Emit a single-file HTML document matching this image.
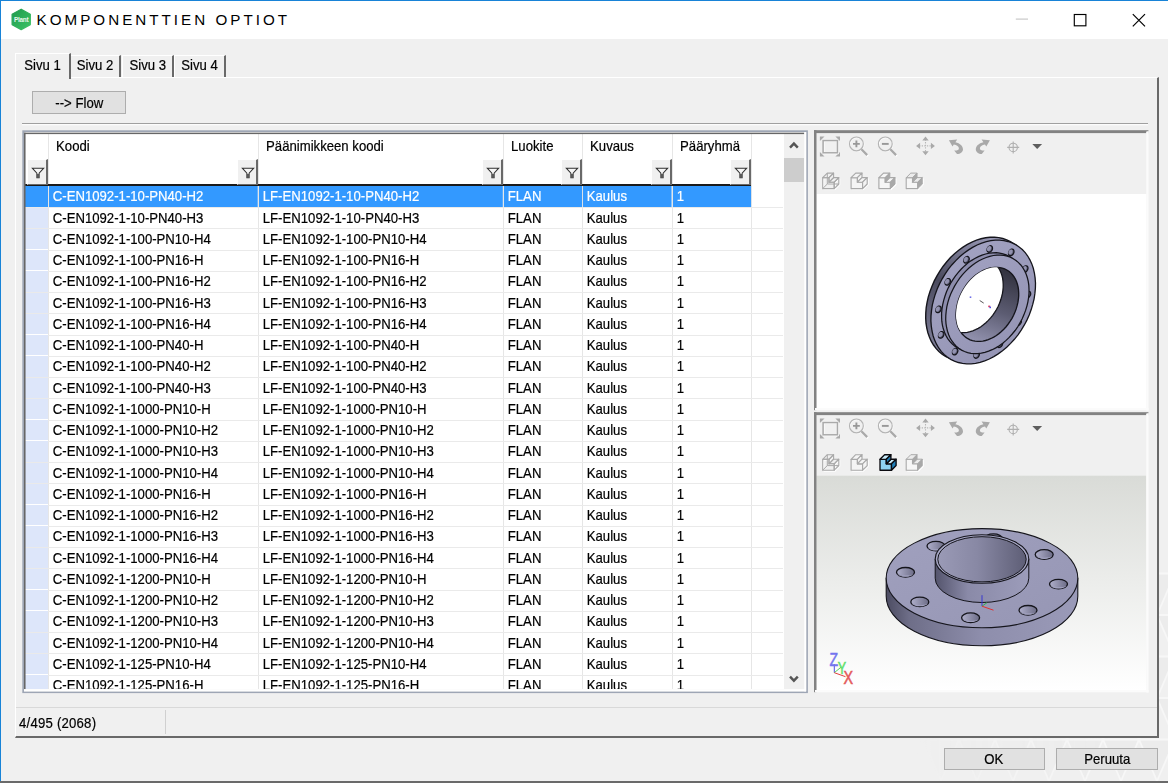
<!DOCTYPE html>
<html lang="fi"><head><meta charset="utf-8"><title>KOMPONENTTIEN OPTIOT</title>
<style>
*{box-sizing:border-box;margin:0;padding:0}
html,body{width:1168px;height:783px;overflow:hidden;background:#f0f0f0}
body{position:relative;font-family:"Liberation Sans",sans-serif;font-size:15px;letter-spacing:0;color:#000;-webkit-text-stroke:0.22px #000}
.abs,.win *{position:absolute}
.win{position:absolute;left:0;top:0;width:1168px;height:783px;background:#f0f0f0;overflow:hidden}
.bl{left:0;top:0;width:1.2px;height:783px;background:#1883d7}
.bt{left:0;top:0;width:1168px;height:1.2px;background:#1883d7}
.bb{left:0;top:781.3px;width:1168px;height:2px;background:#6a6a6a}
.title{left:1px;top:1px;width:1167px;height:37.6px;background:#fff}
.ttext{-webkit-text-stroke:0;left:36.5px;top:10.6px;font-size:15.2px;letter-spacing:3.02px;line-height:18px;white-space:nowrap;color:#000}
.tab{height:22.3px;top:55px;border-top:1.25px solid #fff;border-left:1.25px solid #fff;border-right:2.5px solid #696969;background:#f0f0f0;white-space:nowrap;line-height:14px}
.tab span{left:0;right:0;top:1.6px;text-align:center;transform:scaleX(0.877)}
.tab.on{top:53px;height:26px;z-index:3}
.tab.on span{top:3.6px}
.page{left:15px;top:77.3px;width:1144px;height:661px;border-top:1.25px solid #fff;border-left:1.25px solid #fff;border-right:2.5px solid #696969;border-bottom:2.5px solid #696969;background:#f0f0f0}
.btn{background:#e1e1e1;border:1px solid #adadad;text-align:center;white-space:nowrap}
.btn span{position:static;display:inline-block;transform:scaleX(0.877)}
.sep{left:22px;top:122.7px;width:1126px;height:1.25px;background:#a0a0a0;box-shadow:0 1.25px 0 #fff}
.gridb{left:22px;top:131px;width:786px;height:561.5px;background:#fff;border:1px solid #a0a0a0;border-right-color:#e3e3e3;border-bottom-color:#e8e8e8}
.gridb2{left:23px;top:132px;width:784px;height:559.5px;border:2px solid #6b6b6b;border-right:3px solid #a3adbb;border-bottom:2px solid #8e9cb0}
.grid{left:25px;top:134px;width:779px;height:555.2px;background:#fff;overflow:hidden}
.h{top:4.4px;height:16px;padding-left:9.2px;transform:scaleX(0.877);transform-origin:0 0;white-space:nowrap;line-height:16px}
.vl{top:0;width:1px;height:555px;background:#e6e6e6}
.hline{left:0;top:50px;width:726px;height:2.4px;background:#1a1a1a;z-index:1}
.fbtn{top:25px;width:21px;height:26.3px;background:#f0f0f0;border-left:1.25px solid #fff;border-top:1.25px solid #fff;border-right:2px solid #696969;border-bottom:1.5px solid #696969;z-index:2}
.fbtn .fn{left:2.6px;top:6.4px}
.r{left:0;width:758px;height:21.25px;white-space:nowrap}
.r:after{content:"";position:absolute;left:0;bottom:-0.6px;width:758px;height:1px;background:#eaeaea}
.r .rh{left:0;top:0;width:22.5px;height:20.2px;background:#dde6fa}
.r .c{top:0;height:20.2px;line-height:19.9px;padding-left:4.3px;overflow:hidden;transform:scaleX(0.877);transform-origin:0 0}
.r.sel .rh,.r.sel .c{background:#3399ff;color:#fff;-webkit-text-stroke-color:#fff}
.sb{left:759px;top:0;width:20px;height:555px;background:#f0f0f0}
.thumb{left:0;top:24px;width:20px;height:23.5px;background:#cdcdcd}
.panel{left:814px;width:335px;border:2.5px solid #828282;border-right:2.5px solid #fdfdfd;border-bottom:2.5px solid #fdfdfd;background:#f0f0f0;overflow:hidden}
.vp{left:0;top:61px;width:330px;overflow:hidden}
.stl{left:16px;top:706.8px;width:1141px;height:1.25px;background:#d9d9d9}
.std{left:165px;top:709.5px;width:1.25px;height:24.5px;background:#d0d0d0}
</style></head><body>
<div class="win">
 <div class="title"></div>
 <svg class="abs" style="left:10px;top:8px" width="23" height="23" viewBox="0 0 23 23"><defs><linearGradient id="lg" x1="0" y1="0" x2="1" y2="1"><stop offset="0" stop-color="#1f9a4e"/><stop offset="1" stop-color="#3cc365"/></linearGradient></defs><path d="M11.2 1.2 L20.3 6.2 V16.6 L11.2 21.6 L2.1 16.6 V6.2Z" fill="url(#lg)" stroke="url(#lg)" stroke-width="1.2" stroke-linejoin="round"/><text x="11.2" y="13.9" font-family="Liberation Sans, sans-serif" font-weight="bold" font-size="6.4" letter-spacing="-0.2" text-anchor="middle" fill="#e9f7ee">Plant</text></svg>
 <div class="ttext">KOMPONENTTIEN OPTIOT</div>
 <svg class="abs" style="left:1010px;top:8px" width="150" height="24" viewBox="0 0 150 24"><path d="M5.8 11.1H18" stroke="#c9c9c9" stroke-width="1.2" fill="none"/><rect x="64.3" y="6.5" width="11.6" height="11.3" fill="none" stroke="#000" stroke-width="1.15"/><path d="M122.8 6.2 L135 18.4 M135 6.2 L122.8 18.4" stroke="#000" stroke-width="1.2" fill="none"/></svg>

<svg class="abs" style="left:880px;top:560px" width="288" height="223" viewBox="0 0 288 223"><defs><linearGradient id="pf" x1="0" y1="0" x2="1" y2="0"><stop offset="0.12" stop-color="#fff" stop-opacity="0"/><stop offset="0.8" stop-color="#fff" stop-opacity="1"/></linearGradient><mask id="pm"><rect width="288" height="223" fill="url(#pf)"/></mask></defs><g mask="url(#pm)"><path d="M-101.0 179.5L-83.0 221.0L-65.0 179.5ZM-65.0 179.5L-47.0 221.0L-29.0 179.5ZM-29.0 179.5L-11.0 221.0L7.0 179.5ZM7.0 179.5L25.0 221.0L43.0 179.5ZM43.0 179.5L61.0 221.0L79.0 179.5ZM79.0 179.5L97.0 221.0L115.0 179.5ZM115.0 179.5L133.0 221.0L151.0 179.5ZM151.0 179.5L169.0 221.0L187.0 179.5ZM187.0 179.5L205.0 221.0L223.0 179.5ZM223.0 179.5L241.0 221.0L259.0 179.5ZM259.0 179.5L277.0 221.0L295.0 179.5ZM295.0 179.5L313.0 221.0L331.0 179.5ZM-83.0 138.0L-101.0 179.5L-119.0 138.0ZM-47.0 138.0L-65.0 179.5L-83.0 138.0ZM-11.0 138.0L-29.0 179.5L-47.0 138.0ZM25.0 138.0L7.0 179.5L-11.0 138.0ZM61.0 138.0L43.0 179.5L25.0 138.0ZM97.0 138.0L79.0 179.5L61.0 138.0ZM133.0 138.0L115.0 179.5L97.0 138.0ZM169.0 138.0L151.0 179.5L133.0 138.0ZM205.0 138.0L187.0 179.5L169.0 138.0ZM241.0 138.0L223.0 179.5L205.0 138.0ZM277.0 138.0L259.0 179.5L241.0 138.0ZM313.0 138.0L295.0 179.5L277.0 138.0ZM-101.0 96.5L-83.0 138.0L-65.0 96.5ZM-65.0 96.5L-47.0 138.0L-29.0 96.5ZM-29.0 96.5L-11.0 138.0L7.0 96.5ZM7.0 96.5L25.0 138.0L43.0 96.5ZM43.0 96.5L61.0 138.0L79.0 96.5ZM79.0 96.5L97.0 138.0L115.0 96.5ZM115.0 96.5L133.0 138.0L151.0 96.5ZM151.0 96.5L169.0 138.0L187.0 96.5ZM187.0 96.5L205.0 138.0L223.0 96.5ZM223.0 96.5L241.0 138.0L259.0 96.5ZM259.0 96.5L277.0 138.0L295.0 96.5ZM295.0 96.5L313.0 138.0L331.0 96.5ZM-83.0 55.0L-101.0 96.5L-119.0 55.0ZM-47.0 55.0L-65.0 96.5L-83.0 55.0ZM-11.0 55.0L-29.0 96.5L-47.0 55.0ZM25.0 55.0L7.0 96.5L-11.0 55.0ZM61.0 55.0L43.0 96.5L25.0 55.0ZM97.0 55.0L79.0 96.5L61.0 55.0ZM133.0 55.0L115.0 96.5L97.0 55.0ZM169.0 55.0L151.0 96.5L133.0 55.0ZM205.0 55.0L187.0 96.5L169.0 55.0ZM241.0 55.0L223.0 96.5L205.0 55.0ZM277.0 55.0L259.0 96.5L241.0 55.0ZM313.0 55.0L295.0 96.5L277.0 55.0ZM-101.0 13.5L-83.0 55.0L-65.0 13.5ZM-65.0 13.5L-47.0 55.0L-29.0 13.5ZM-29.0 13.5L-11.0 55.0L7.0 13.5ZM7.0 13.5L25.0 55.0L43.0 13.5ZM43.0 13.5L61.0 55.0L79.0 13.5ZM79.0 13.5L97.0 55.0L115.0 13.5ZM115.0 13.5L133.0 55.0L151.0 13.5ZM151.0 13.5L169.0 55.0L187.0 13.5ZM187.0 13.5L205.0 55.0L223.0 13.5ZM223.0 13.5L241.0 55.0L259.0 13.5ZM259.0 13.5L277.0 55.0L295.0 13.5ZM295.0 13.5L313.0 55.0L331.0 13.5ZM-83.0 -28.0L-101.0 13.5L-119.0 -28.0ZM-47.0 -28.0L-65.0 13.5L-83.0 -28.0ZM-11.0 -28.0L-29.0 13.5L-47.0 -28.0ZM25.0 -28.0L7.0 13.5L-11.0 -28.0ZM61.0 -28.0L43.0 13.5L25.0 -28.0ZM97.0 -28.0L79.0 13.5L61.0 -28.0ZM133.0 -28.0L115.0 13.5L97.0 -28.0ZM169.0 -28.0L151.0 13.5L133.0 -28.0ZM205.0 -28.0L187.0 13.5L169.0 -28.0ZM241.0 -28.0L223.0 13.5L205.0 -28.0ZM277.0 -28.0L259.0 13.5L241.0 -28.0ZM313.0 -28.0L295.0 13.5L277.0 -28.0ZM-101.0 -69.5L-83.0 -28.0L-65.0 -69.5ZM-65.0 -69.5L-47.0 -28.0L-29.0 -69.5ZM-29.0 -69.5L-11.0 -28.0L7.0 -69.5ZM7.0 -69.5L25.0 -28.0L43.0 -69.5ZM43.0 -69.5L61.0 -28.0L79.0 -69.5ZM79.0 -69.5L97.0 -28.0L115.0 -69.5ZM115.0 -69.5L133.0 -28.0L151.0 -69.5ZM151.0 -69.5L169.0 -28.0L187.0 -69.5ZM187.0 -69.5L205.0 -28.0L223.0 -69.5ZM223.0 -69.5L241.0 -28.0L259.0 -69.5ZM259.0 -69.5L277.0 -28.0L295.0 -69.5ZM295.0 -69.5L313.0 -28.0L331.0 -69.5Z" fill="#ececec"/><path d="M-101.0 179.5L-83.0 221.0L-65.0 179.5L-47.0 221.0L-29.0 179.5L-11.0 221.0L7.0 179.5L25.0 221.0L43.0 179.5L61.0 221.0L79.0 179.5L97.0 221.0L115.0 179.5L133.0 221.0L151.0 179.5L169.0 221.0L187.0 179.5L205.0 221.0L223.0 179.5L241.0 221.0L259.0 179.5L277.0 221.0L295.0 179.5L313.0 221.0M0 179.5H288M-101.0 179.5L-83.0 138.0L-65.0 179.5L-47.0 138.0L-29.0 179.5L-11.0 138.0L7.0 179.5L25.0 138.0L43.0 179.5L61.0 138.0L79.0 179.5L97.0 138.0L115.0 179.5L133.0 138.0L151.0 179.5L169.0 138.0L187.0 179.5L205.0 138.0L223.0 179.5L241.0 138.0L259.0 179.5L277.0 138.0L295.0 179.5L313.0 138.0M0 138.0H288M-101.0 96.5L-83.0 138.0L-65.0 96.5L-47.0 138.0L-29.0 96.5L-11.0 138.0L7.0 96.5L25.0 138.0L43.0 96.5L61.0 138.0L79.0 96.5L97.0 138.0L115.0 96.5L133.0 138.0L151.0 96.5L169.0 138.0L187.0 96.5L205.0 138.0L223.0 96.5L241.0 138.0L259.0 96.5L277.0 138.0L295.0 96.5L313.0 138.0M0 96.5H288M-101.0 96.5L-83.0 55.0L-65.0 96.5L-47.0 55.0L-29.0 96.5L-11.0 55.0L7.0 96.5L25.0 55.0L43.0 96.5L61.0 55.0L79.0 96.5L97.0 55.0L115.0 96.5L133.0 55.0L151.0 96.5L169.0 55.0L187.0 96.5L205.0 55.0L223.0 96.5L241.0 55.0L259.0 96.5L277.0 55.0L295.0 96.5L313.0 55.0M0 55.0H288M-101.0 13.5L-83.0 55.0L-65.0 13.5L-47.0 55.0L-29.0 13.5L-11.0 55.0L7.0 13.5L25.0 55.0L43.0 13.5L61.0 55.0L79.0 13.5L97.0 55.0L115.0 13.5L133.0 55.0L151.0 13.5L169.0 55.0L187.0 13.5L205.0 55.0L223.0 13.5L241.0 55.0L259.0 13.5L277.0 55.0L295.0 13.5L313.0 55.0M0 13.5H288M-101.0 13.5L-83.0 -28.0L-65.0 13.5L-47.0 -28.0L-29.0 13.5L-11.0 -28.0L7.0 13.5L25.0 -28.0L43.0 13.5L61.0 -28.0L79.0 13.5L97.0 -28.0L115.0 13.5L133.0 -28.0L151.0 13.5L169.0 -28.0L187.0 13.5L205.0 -28.0L223.0 13.5L241.0 -28.0L259.0 13.5L277.0 -28.0L295.0 13.5L313.0 -28.0M0 -28.0H288M-101.0 -69.5L-83.0 -28.0L-65.0 -69.5L-47.0 -28.0L-29.0 -69.5L-11.0 -28.0L7.0 -69.5L25.0 -28.0L43.0 -69.5L61.0 -28.0L79.0 -69.5L97.0 -28.0L115.0 -69.5L133.0 -28.0L151.0 -69.5L169.0 -28.0L187.0 -69.5L205.0 -28.0L223.0 -69.5L241.0 -28.0L259.0 -69.5L277.0 -28.0L295.0 -69.5L313.0 -28.0M0 -69.5H288" fill="none" stroke="#f7f7f7" stroke-width="1.8"/></g></svg>
 <div class="page"></div>
 <div class="tab" style="left:70px;width:51px"><span>Sivu 2</span></div>
 <div class="tab" style="left:121.5px;width:52.5px"><span>Sivu 3</span></div>
 <div class="tab" style="left:174px;width:52px"><span>Sivu 4</span></div>
 <div class="tab on" style="left:15px;width:56px"><span>Sivu 1</span></div>
 <div class="abs" style="left:16.25px;top:77px;width:52.5px;height:3px;background:#f0f0f0;z-index:4"></div>

 <div class="btn" style="left:32px;top:91.3px;width:94px;height:22.6px;line-height:21.5px"><span>--&gt; Flow</span></div>
 <div class="sep"></div>


 <div class="grid">
  <i class="vl" style="left:23px"></i><i class="vl" style="left:233px"></i><i class="vl" style="left:478px"></i><i class="vl" style="left:557px"></i><i class="vl" style="left:647px"></i><i class="vl" style="left:726px"></i>
  <span class="h" style="left:23px;width:239.45px">Koodi</span><span class="h" style="left:233px;width:279.36px">Päänimikkeen koodi</span><span class="h" style="left:478px;width:90.08px">Luokite</span><span class="h" style="left:557px;width:102.62px">Kuvaus</span><span class="h" style="left:647px;width:90.08px">Pääryhmä</span>
  <div class="hline"></div>
  <div class="fbtn" style="left:2px"><svg class="fn" viewBox="0 0 16 16" width="14" height="14"><path d="M1.5 2.5 H14.5 L9.3 8.2 V13.5 H6.7 V8.2 Z" fill="#f6f6f6" stroke="#303030" stroke-width="1.15" stroke-linejoin="miter"/><path d="M6.9 9 H9.1 V13.3 H6.9Z" fill="#555"/></svg></div>
  <div class="fbtn" style="left:2px"><svg class="fn" viewBox="0 0 16 16" width="14" height="14"><path d="M1.5 2.5 H14.5 L9.3 8.2 V13.5 H6.7 V8.2 Z" fill="#f6f6f6" stroke="#303030" stroke-width="1.15" stroke-linejoin="miter"/><path d="M6.9 9 H9.1 V13.3 H6.9Z" fill="#555"/></svg></div><div class="fbtn" style="left:212px"><svg class="fn" viewBox="0 0 16 16" width="14" height="14"><path d="M1.5 2.5 H14.5 L9.3 8.2 V13.5 H6.7 V8.2 Z" fill="#f6f6f6" stroke="#303030" stroke-width="1.15" stroke-linejoin="miter"/><path d="M6.9 9 H9.1 V13.3 H6.9Z" fill="#555"/></svg></div><div class="fbtn" style="left:457px"><svg class="fn" viewBox="0 0 16 16" width="14" height="14"><path d="M1.5 2.5 H14.5 L9.3 8.2 V13.5 H6.7 V8.2 Z" fill="#f6f6f6" stroke="#303030" stroke-width="1.15" stroke-linejoin="miter"/><path d="M6.9 9 H9.1 V13.3 H6.9Z" fill="#555"/></svg></div><div class="fbtn" style="left:536px"><svg class="fn" viewBox="0 0 16 16" width="14" height="14"><path d="M1.5 2.5 H14.5 L9.3 8.2 V13.5 H6.7 V8.2 Z" fill="#f6f6f6" stroke="#303030" stroke-width="1.15" stroke-linejoin="miter"/><path d="M6.9 9 H9.1 V13.3 H6.9Z" fill="#555"/></svg></div><div class="fbtn" style="left:626px"><svg class="fn" viewBox="0 0 16 16" width="14" height="14"><path d="M1.5 2.5 H14.5 L9.3 8.2 V13.5 H6.7 V8.2 Z" fill="#f6f6f6" stroke="#303030" stroke-width="1.15" stroke-linejoin="miter"/><path d="M6.9 9 H9.1 V13.3 H6.9Z" fill="#555"/></svg></div><div class="fbtn" style="left:705px"><svg class="fn" viewBox="0 0 16 16" width="14" height="14"><path d="M1.5 2.5 H14.5 L9.3 8.2 V13.5 H6.7 V8.2 Z" fill="#f6f6f6" stroke="#303030" stroke-width="1.15" stroke-linejoin="miter"/><path d="M6.9 9 H9.1 V13.3 H6.9Z" fill="#555"/></svg></div>
<div class="r sel" style="top:52.40px"><span class="rh"></span><span class="c" style="left:24px;width:238.31px">C-EN1092-1-10-PN40-H2</span><span class="c" style="left:234px;width:278.22px">LF-EN1092-1-10-PN40-H2</span><span class="c" style="left:479px;width:88.94px">FLAN</span><span class="c" style="left:558px;width:101.48px">Kaulus</span><span class="c" style="left:648px;width:88.94px">1</span></div>
<div class="r" style="top:73.65px"><span class="rh"></span><span class="c" style="left:24px;width:238.31px">C-EN1092-1-10-PN40-H3</span><span class="c" style="left:234px;width:278.22px">LF-EN1092-1-10-PN40-H3</span><span class="c" style="left:479px;width:88.94px">FLAN</span><span class="c" style="left:558px;width:101.48px">Kaulus</span><span class="c" style="left:648px;width:88.94px">1</span></div>
<div class="r" style="top:94.90px"><span class="rh"></span><span class="c" style="left:24px;width:238.31px">C-EN1092-1-100-PN10-H4</span><span class="c" style="left:234px;width:278.22px">LF-EN1092-1-100-PN10-H4</span><span class="c" style="left:479px;width:88.94px">FLAN</span><span class="c" style="left:558px;width:101.48px">Kaulus</span><span class="c" style="left:648px;width:88.94px">1</span></div>
<div class="r" style="top:116.15px"><span class="rh"></span><span class="c" style="left:24px;width:238.31px">C-EN1092-1-100-PN16-H</span><span class="c" style="left:234px;width:278.22px">LF-EN1092-1-100-PN16-H</span><span class="c" style="left:479px;width:88.94px">FLAN</span><span class="c" style="left:558px;width:101.48px">Kaulus</span><span class="c" style="left:648px;width:88.94px">1</span></div>
<div class="r" style="top:137.40px"><span class="rh"></span><span class="c" style="left:24px;width:238.31px">C-EN1092-1-100-PN16-H2</span><span class="c" style="left:234px;width:278.22px">LF-EN1092-1-100-PN16-H2</span><span class="c" style="left:479px;width:88.94px">FLAN</span><span class="c" style="left:558px;width:101.48px">Kaulus</span><span class="c" style="left:648px;width:88.94px">1</span></div>
<div class="r" style="top:158.65px"><span class="rh"></span><span class="c" style="left:24px;width:238.31px">C-EN1092-1-100-PN16-H3</span><span class="c" style="left:234px;width:278.22px">LF-EN1092-1-100-PN16-H3</span><span class="c" style="left:479px;width:88.94px">FLAN</span><span class="c" style="left:558px;width:101.48px">Kaulus</span><span class="c" style="left:648px;width:88.94px">1</span></div>
<div class="r" style="top:179.90px"><span class="rh"></span><span class="c" style="left:24px;width:238.31px">C-EN1092-1-100-PN16-H4</span><span class="c" style="left:234px;width:278.22px">LF-EN1092-1-100-PN16-H4</span><span class="c" style="left:479px;width:88.94px">FLAN</span><span class="c" style="left:558px;width:101.48px">Kaulus</span><span class="c" style="left:648px;width:88.94px">1</span></div>
<div class="r" style="top:201.15px"><span class="rh"></span><span class="c" style="left:24px;width:238.31px">C-EN1092-1-100-PN40-H</span><span class="c" style="left:234px;width:278.22px">LF-EN1092-1-100-PN40-H</span><span class="c" style="left:479px;width:88.94px">FLAN</span><span class="c" style="left:558px;width:101.48px">Kaulus</span><span class="c" style="left:648px;width:88.94px">1</span></div>
<div class="r" style="top:222.40px"><span class="rh"></span><span class="c" style="left:24px;width:238.31px">C-EN1092-1-100-PN40-H2</span><span class="c" style="left:234px;width:278.22px">LF-EN1092-1-100-PN40-H2</span><span class="c" style="left:479px;width:88.94px">FLAN</span><span class="c" style="left:558px;width:101.48px">Kaulus</span><span class="c" style="left:648px;width:88.94px">1</span></div>
<div class="r" style="top:243.65px"><span class="rh"></span><span class="c" style="left:24px;width:238.31px">C-EN1092-1-100-PN40-H3</span><span class="c" style="left:234px;width:278.22px">LF-EN1092-1-100-PN40-H3</span><span class="c" style="left:479px;width:88.94px">FLAN</span><span class="c" style="left:558px;width:101.48px">Kaulus</span><span class="c" style="left:648px;width:88.94px">1</span></div>
<div class="r" style="top:264.90px"><span class="rh"></span><span class="c" style="left:24px;width:238.31px">C-EN1092-1-1000-PN10-H</span><span class="c" style="left:234px;width:278.22px">LF-EN1092-1-1000-PN10-H</span><span class="c" style="left:479px;width:88.94px">FLAN</span><span class="c" style="left:558px;width:101.48px">Kaulus</span><span class="c" style="left:648px;width:88.94px">1</span></div>
<div class="r" style="top:286.15px"><span class="rh"></span><span class="c" style="left:24px;width:238.31px">C-EN1092-1-1000-PN10-H2</span><span class="c" style="left:234px;width:278.22px">LF-EN1092-1-1000-PN10-H2</span><span class="c" style="left:479px;width:88.94px">FLAN</span><span class="c" style="left:558px;width:101.48px">Kaulus</span><span class="c" style="left:648px;width:88.94px">1</span></div>
<div class="r" style="top:307.40px"><span class="rh"></span><span class="c" style="left:24px;width:238.31px">C-EN1092-1-1000-PN10-H3</span><span class="c" style="left:234px;width:278.22px">LF-EN1092-1-1000-PN10-H3</span><span class="c" style="left:479px;width:88.94px">FLAN</span><span class="c" style="left:558px;width:101.48px">Kaulus</span><span class="c" style="left:648px;width:88.94px">1</span></div>
<div class="r" style="top:328.65px"><span class="rh"></span><span class="c" style="left:24px;width:238.31px">C-EN1092-1-1000-PN10-H4</span><span class="c" style="left:234px;width:278.22px">LF-EN1092-1-1000-PN10-H4</span><span class="c" style="left:479px;width:88.94px">FLAN</span><span class="c" style="left:558px;width:101.48px">Kaulus</span><span class="c" style="left:648px;width:88.94px">1</span></div>
<div class="r" style="top:349.90px"><span class="rh"></span><span class="c" style="left:24px;width:238.31px">C-EN1092-1-1000-PN16-H</span><span class="c" style="left:234px;width:278.22px">LF-EN1092-1-1000-PN16-H</span><span class="c" style="left:479px;width:88.94px">FLAN</span><span class="c" style="left:558px;width:101.48px">Kaulus</span><span class="c" style="left:648px;width:88.94px">1</span></div>
<div class="r" style="top:371.15px"><span class="rh"></span><span class="c" style="left:24px;width:238.31px">C-EN1092-1-1000-PN16-H2</span><span class="c" style="left:234px;width:278.22px">LF-EN1092-1-1000-PN16-H2</span><span class="c" style="left:479px;width:88.94px">FLAN</span><span class="c" style="left:558px;width:101.48px">Kaulus</span><span class="c" style="left:648px;width:88.94px">1</span></div>
<div class="r" style="top:392.40px"><span class="rh"></span><span class="c" style="left:24px;width:238.31px">C-EN1092-1-1000-PN16-H3</span><span class="c" style="left:234px;width:278.22px">LF-EN1092-1-1000-PN16-H3</span><span class="c" style="left:479px;width:88.94px">FLAN</span><span class="c" style="left:558px;width:101.48px">Kaulus</span><span class="c" style="left:648px;width:88.94px">1</span></div>
<div class="r" style="top:413.65px"><span class="rh"></span><span class="c" style="left:24px;width:238.31px">C-EN1092-1-1000-PN16-H4</span><span class="c" style="left:234px;width:278.22px">LF-EN1092-1-1000-PN16-H4</span><span class="c" style="left:479px;width:88.94px">FLAN</span><span class="c" style="left:558px;width:101.48px">Kaulus</span><span class="c" style="left:648px;width:88.94px">1</span></div>
<div class="r" style="top:434.90px"><span class="rh"></span><span class="c" style="left:24px;width:238.31px">C-EN1092-1-1200-PN10-H</span><span class="c" style="left:234px;width:278.22px">LF-EN1092-1-1200-PN10-H</span><span class="c" style="left:479px;width:88.94px">FLAN</span><span class="c" style="left:558px;width:101.48px">Kaulus</span><span class="c" style="left:648px;width:88.94px">1</span></div>
<div class="r" style="top:456.15px"><span class="rh"></span><span class="c" style="left:24px;width:238.31px">C-EN1092-1-1200-PN10-H2</span><span class="c" style="left:234px;width:278.22px">LF-EN1092-1-1200-PN10-H2</span><span class="c" style="left:479px;width:88.94px">FLAN</span><span class="c" style="left:558px;width:101.48px">Kaulus</span><span class="c" style="left:648px;width:88.94px">1</span></div>
<div class="r" style="top:477.40px"><span class="rh"></span><span class="c" style="left:24px;width:238.31px">C-EN1092-1-1200-PN10-H3</span><span class="c" style="left:234px;width:278.22px">LF-EN1092-1-1200-PN10-H3</span><span class="c" style="left:479px;width:88.94px">FLAN</span><span class="c" style="left:558px;width:101.48px">Kaulus</span><span class="c" style="left:648px;width:88.94px">1</span></div>
<div class="r" style="top:498.65px"><span class="rh"></span><span class="c" style="left:24px;width:238.31px">C-EN1092-1-1200-PN10-H4</span><span class="c" style="left:234px;width:278.22px">LF-EN1092-1-1200-PN10-H4</span><span class="c" style="left:479px;width:88.94px">FLAN</span><span class="c" style="left:558px;width:101.48px">Kaulus</span><span class="c" style="left:648px;width:88.94px">1</span></div>
<div class="r" style="top:519.90px"><span class="rh"></span><span class="c" style="left:24px;width:238.31px">C-EN1092-1-125-PN10-H4</span><span class="c" style="left:234px;width:278.22px">LF-EN1092-1-125-PN10-H4</span><span class="c" style="left:479px;width:88.94px">FLAN</span><span class="c" style="left:558px;width:101.48px">Kaulus</span><span class="c" style="left:648px;width:88.94px">1</span></div>
<div class="r" style="top:541.15px"><span class="rh"></span><span class="c" style="left:24px;width:238.31px">C-EN1092-1-125-PN16-H</span><span class="c" style="left:234px;width:278.22px">LF-EN1092-1-125-PN16-H</span><span class="c" style="left:479px;width:88.94px">FLAN</span><span class="c" style="left:558px;width:101.48px">Kaulus</span><span class="c" style="left:648px;width:88.94px">1</span></div>
  <div class="sb"><div class="thumb"></div>
   <svg style="left:0;top:0" width="20" height="20" viewBox="0 0 20 20"><path d="M6.0 13.7 L9.9 9.6 L13.8 13.7" fill="none" stroke="#555" stroke-width="2.4"/></svg>
   <svg style="left:0;top:535px" width="20" height="20" viewBox="0 0 20 20"><path d="M6.0 7.6 L9.9 11.7 L13.8 7.6" fill="none" stroke="#555" stroke-width="2.4"/></svg>
  </div>
 </div>

 <svg class="abs" style="left:20px;top:128px;z-index:5;pointer-events:none" width="792" height="568" viewBox="20 128 792 568">
  <rect x="23.15" y="131.15" width="783.9" height="561.1" fill="none" stroke="#9ea6b5" stroke-width="1.7"/>
  <rect x="24" y="132.7" width="780.3" height="1.4" fill="#666"/>
  <rect x="24" y="132.7" width="1.55" height="556.6" fill="#666"/>
  <rect x="804.3" y="132" width="1.9" height="559.4" fill="#fff"/>
  <rect x="24" y="689.2" width="782" height="2.2" fill="#fff"/>
 </svg>
 <svg class="abs" style="left:814.0px;top:130.0px" width="335" height="281" viewBox="0 0 335 281"><rect x="0" y="0" width="335" height="281" fill="#f0f0f0"/><rect x="2.4" y="64" width="330" height="214.2" fill="#fff"/><g><path d="M5.9 6.5h4.6l-4.6 4.6Z M26.0 6.5v4.6l-4.6 -4.6Z M5.9 26.6v-4.6l4.6 4.6Z M26.0 26.6h-4.6l4.6 -4.6Z" fill="#a9a9a9"/><rect x="9.9" y="11.4" width="14.4" height="12.2" fill="none" stroke="#fff" stroke-width="1.2"/><rect x="9.1" y="10.6" width="14.4" height="12.2" fill="none" stroke="#a9a9a9" stroke-width="1.5"/><path d="M48.0 20.1 L54.0 26.1" stroke="#fff" stroke-width="2.2" fill="none"/><circle cx="43.1" cy="14.6" r="6.9" fill="none" stroke="#fff" stroke-width="1"/><circle cx="42.4" cy="13.9" r="6.9" fill="none" stroke="#b4b4b4" stroke-width="1.15"/><path d="M47.4 19.3 L53.2 25.1" stroke="#a9a9a9" stroke-width="2.3" fill="none"/><path d="M39.0 13.9H45.8 M42.4 10.5V17.3" stroke="#989898" stroke-width="1.9" fill="none"/><path d="M76.89999999999999 20.1 L82.89999999999999 26.1" stroke="#fff" stroke-width="2.2" fill="none"/><circle cx="72.0" cy="14.6" r="6.9" fill="none" stroke="#fff" stroke-width="1"/><circle cx="71.3" cy="13.9" r="6.9" fill="none" stroke="#b4b4b4" stroke-width="1.15"/><path d="M76.3 19.3 L82.1 25.1" stroke="#a9a9a9" stroke-width="2.3" fill="none"/><path d="M67.89999999999999 13.9H74.7" stroke="#989898" stroke-width="1.9" fill="none"/><path d="M111.5 9.5V22.3 M105.1 15.9H117.9" stroke="#b8b8b8" stroke-width="1.1" stroke-dasharray="1.3 1.3" fill="none"/><path d="M111.5 6.5l3.2 4h-6.4Z M111.5 25.3l3.2 -4h-6.4Z M102.1 15.9l4 -3.2v6.4Z M120.9 15.9l-4 -3.2v6.4Z" fill="#a9a9a9"/><path transform="translate(134.6 9)" d="M0.3 1.2 L8.6 0.6 L6.8 3.2 C11.5 4.2 14.6 7.2 14.4 10.6 C14.2 13.2 11.6 15.2 8.4 15.1 L5.6 11.4 C8.4 11.6 10.2 10.9 10.3 9.4 C10.4 7.6 8.2 6.2 5.2 5.6 L3.9 7.4 Z" fill="#a9a9a9"/><path transform="translate(176.2 9) scale(-1 1)" d="M0.3 1.2 L8.6 0.6 L6.8 3.2 C11.5 4.2 14.6 7.2 14.4 10.6 C14.2 13.2 11.6 15.2 8.4 15.1 L5.6 11.4 C8.4 11.6 10.2 10.9 10.3 9.4 C10.4 7.6 8.2 6.2 5.2 5.6 L3.9 7.4 Z" fill="#a9a9a9"/><circle cx="199.2" cy="17.4" r="4.2" fill="none" stroke="#b0b0b0" stroke-width="1.1"/><path d="M193.2 17.4H205.2 M199.2 11.399999999999999V23.4" stroke="#b0b0b0" stroke-width="1.1" fill="none"/><path d="M218.3 14.1 H228.1 L223.2 18.9Z" fill="#5e5e5e"/><polygon points="9.70,48.70 16.00,48.70 16.00,53.20 21.20,53.20 21.20,59.60 9.70,59.60" fill="none" stroke="#fff" stroke-width="1.0" stroke-linejoin="round"/><polygon points="21.20,53.20 25.80,48.60 25.80,55.00 21.20,59.60" fill="none" stroke="#fff" stroke-width="1.0" stroke-linejoin="round"/><polygon points="8.70,47.70 15.00,47.70 15.00,52.20 20.20,52.20 20.20,58.60 8.70,58.60" fill="none" stroke="#a9a9a9" stroke-width="1.1" stroke-linejoin="round"/><polygon points="8.70,47.70 13.30,43.10 19.60,43.10 15.00,47.70" fill="none" stroke="#a9a9a9" stroke-width="1.1" stroke-linejoin="round"/><polygon points="15.00,47.70 19.60,43.10 19.60,47.60 15.00,52.20" fill="none" stroke="#a9a9a9" stroke-width="1.1" stroke-linejoin="round"/><polygon points="15.00,52.20 19.60,47.60 24.80,47.60 20.20,52.20" fill="none" stroke="#a9a9a9" stroke-width="1.1" stroke-linejoin="round"/><polygon points="20.20,52.20 24.80,47.60 24.80,54.00 20.20,58.60" fill="none" stroke="#a9a9a9" stroke-width="1.1" stroke-linejoin="round"/><path d="M13.30 43.10 V54.00 H24.80 M8.70 58.60 L13.30 54.00" fill="none" stroke="#a9a9a9" stroke-width="1"/><polygon points="38.10,48.70 44.40,48.70 44.40,53.20 49.60,53.20 49.60,59.60 38.10,59.60" fill="none" stroke="#fff" stroke-width="1.0" stroke-linejoin="round"/><polygon points="49.60,53.20 54.20,48.60 54.20,55.00 49.60,59.60" fill="none" stroke="#fff" stroke-width="1.0" stroke-linejoin="round"/><polygon points="37.10,47.70 43.40,47.70 43.40,52.20 48.60,52.20 48.60,58.60 37.10,58.60" fill="#f4f4f4" stroke="#a9a9a9" stroke-width="1.15" stroke-linejoin="round"/><polygon points="37.10,47.70 41.70,43.10 48.00,43.10 43.40,47.70" fill="#f4f4f4" stroke="#a9a9a9" stroke-width="1.15" stroke-linejoin="round"/><polygon points="43.40,47.70 48.00,43.10 48.00,47.60 43.40,52.20" fill="#f4f4f4" stroke="#a9a9a9" stroke-width="1.15" stroke-linejoin="round"/><polygon points="43.40,52.20 48.00,47.60 53.20,47.60 48.60,52.20" fill="#f4f4f4" stroke="#a9a9a9" stroke-width="1.15" stroke-linejoin="round"/><polygon points="48.60,52.20 53.20,47.60 53.20,54.00 48.60,58.60" fill="#f4f4f4" stroke="#a9a9a9" stroke-width="1.15" stroke-linejoin="round"/><polygon points="65.90,48.70 72.20,48.70 72.20,53.20 77.40,53.20 77.40,59.60 65.90,59.60" fill="none" stroke="#fff" stroke-width="1.0" stroke-linejoin="round"/><polygon points="77.40,53.20 82.00,48.60 82.00,55.00 77.40,59.60" fill="none" stroke="#fff" stroke-width="1.0" stroke-linejoin="round"/><polygon points="64.90,47.70 71.20,47.70 71.20,52.20 76.40,52.20 76.40,58.60 64.90,58.60" fill="#f6f6f6" stroke="#a9a9a9" stroke-width="1.15" stroke-linejoin="round"/><polygon points="64.90,47.70 69.50,43.10 75.80,43.10 71.20,47.70" fill="#f6f6f6" stroke="#a9a9a9" stroke-width="1.15" stroke-linejoin="round"/><polygon points="71.20,52.20 75.80,47.60 81.00,47.60 76.40,52.20" fill="#f6f6f6" stroke="#a9a9a9" stroke-width="1.15" stroke-linejoin="round"/><polygon points="71.20,47.70 75.80,43.10 75.80,47.60 71.20,52.20" fill="#a9a9a9" stroke="#a9a9a9" stroke-width="1.0" stroke-linejoin="round"/><polygon points="76.40,52.20 81.00,47.60 81.00,54.00 76.40,58.60" fill="#a9a9a9" stroke="#a9a9a9" stroke-width="1.0" stroke-linejoin="round"/><polygon points="93.20,48.70 99.50,48.70 99.50,53.20 104.70,53.20 104.70,59.60 93.20,59.60" fill="none" stroke="#fff" stroke-width="1.0" stroke-linejoin="round"/><polygon points="104.70,53.20 109.30,48.60 109.30,55.00 104.70,59.60" fill="none" stroke="#fff" stroke-width="1.0" stroke-linejoin="round"/><polygon points="92.20,47.70 98.50,47.70 98.50,52.20 103.70,52.20 103.70,58.60 92.20,58.60" fill="#f6f6f6" stroke="#a9a9a9" stroke-width="1.1" stroke-linejoin="round"/><polygon points="92.20,47.70 96.80,43.10 103.10,43.10 98.50,47.70" fill="#ececec" stroke="#a9a9a9" stroke-width="1.0" stroke-linejoin="round"/><polygon points="98.50,52.20 103.10,47.60 108.30,47.60 103.70,52.20" fill="#ececec" stroke="#a9a9a9" stroke-width="1.0" stroke-linejoin="round"/><polygon points="98.50,47.70 103.10,43.10 103.10,47.60 98.50,52.20" fill="#a8a8a8" stroke="#a8a8a8" stroke-width="0.8" stroke-linejoin="round"/><polygon points="103.70,52.20 108.30,47.60 108.30,54.00 103.70,58.60" fill="#a8a8a8" stroke="#a8a8a8" stroke-width="0.8" stroke-linejoin="round"/></g><defs><linearGradient id="v1rim" gradientUnits="userSpaceOnUse" x1="189.2" y1="102.0" x2="139.2" y2="242.0"><stop offset="0" stop-color="#a4a4c2"/><stop offset="0.45" stop-color="#4a4a5e"/><stop offset="1" stop-color="#8c8ca8"/></linearGradient><linearGradient id="v1bore" gradientUnits="userSpaceOnUse" x1="194.2" y1="137.0" x2="164.2" y2="222.0"><stop offset="0" stop-color="#2e2e3a"/><stop offset="0.5" stop-color="#5c5c72"/><stop offset="1" stop-color="#a0a0be"/></linearGradient><linearGradient id="v1face" gradientUnits="userSpaceOnUse" x1="129.2" y1="122.0" x2="209.2" y2="222.0"><stop offset="0" stop-color="#a2a2c2"/><stop offset="1" stop-color="#9494b4"/></linearGradient><clipPath id="v1c"><path d="M192.8 140.0 L194.9 141.3 L196.8 142.9 L198.5 144.8 L200.1 146.8 L201.4 149.1 L202.5 151.5 L203.4 154.2 L204.1 157.0 L204.5 159.9 L204.7 162.9 L204.7 166.0 L204.4 169.2 L203.9 172.4 L203.1 175.7 L202.2 178.9 L201.0 182.1 L199.6 185.2 L198.0 188.3 L196.2 191.2 L194.2 194.0 L192.1 196.7 L189.8 199.2 L187.4 201.5 L184.9 203.6 L182.4 205.5 L179.7 207.1 L177.0 208.5 L174.3 209.6 L171.5 210.5 L168.8 211.1 L166.1 211.4 L163.5 211.4 L161.0 211.2 L158.5 210.6 L156.1 209.8 L153.9 208.7 L151.9 207.4 L150.0 205.8 L148.2 204.0 L146.7 201.9 L145.4 199.6 L144.2 197.2 L143.3 194.5 L142.7 191.8 L142.2 188.8 L142.0 185.8 L142.1 182.7 L142.4 179.5 L142.9 176.3 L143.6 173.1 L144.6 169.8 L145.8 166.6 L147.2 163.5 L148.8 160.5 L150.6 157.5 L152.5 154.7 L154.7 152.0 L156.9 149.5 L159.3 147.2 L161.8 145.1 L164.4 143.3 L167.1 141.6 L169.8 140.2 L172.5 139.1 L175.2 138.2 L177.9 137.6 L180.6 137.3 L183.2 137.3 L185.8 137.6 L188.3 138.1 L190.6 138.9 L192.8 140.0Z"/></clipPath></defs><path d="M196.4 111.7 L199.9 113.9 L203.1 116.6 L205.9 119.6 L208.5 123.1 L210.7 126.9 L212.6 131.0 L214.1 135.4 L215.2 140.0 L215.9 144.9 L216.3 150.0 L216.2 155.2 L215.7 160.5 L214.9 165.8 L213.6 171.2 L212.0 176.6 L210.0 181.9 L207.7 187.2 L205.0 192.2 L202.0 197.2 L198.7 201.9 L195.2 206.3 L191.4 210.5 L187.4 214.3 L183.3 217.8 L179.0 220.9 L174.5 223.7 L170.0 226.0 L165.5 227.9 L160.9 229.3 L156.4 230.3 L151.9 230.8 L147.5 230.9 L143.2 230.5 L139.1 229.6 L135.2 228.2 L131.5 226.4 L128.1 224.2 L124.9 221.5 L122.0 218.4 L119.5 215.0 L117.2 211.2 L115.4 207.1 L113.9 202.7 L112.8 198.1 L112.0 193.2 L111.7 188.1 L111.8 182.9 L112.2 177.6 L113.1 172.3 L114.3 166.9 L116.0 161.5 L118.0 156.2 L120.3 150.9 L123.0 145.8 L126.0 140.9 L129.2 136.2 L132.8 131.8 L136.5 127.6 L140.5 123.8 L144.7 120.3 L149.0 117.1 L153.4 114.4 L157.9 112.1 L162.5 110.2 L167.0 108.8 L171.6 107.8 L176.1 107.3 L180.4 107.2 L184.7 107.6 L188.8 108.5 L192.7 109.9 L196.4 111.7Z" fill="url(#v1rim)" stroke="#15151c" stroke-width="1.4"/><path d="M201.7 114.6 L205.1 116.9 L208.3 119.5 L211.2 122.6 L213.7 126.0 L215.9 129.8 L217.8 133.9 L219.3 138.3 L220.4 143.0 L221.1 147.8 L221.5 152.9 L221.4 158.1 L220.9 163.4 L220.1 168.8 L218.8 174.2 L217.2 179.6 L215.2 184.9 L212.9 190.1 L210.2 195.2 L207.2 200.1 L204.0 204.8 L200.4 209.3 L196.6 213.4 L192.7 217.3 L188.5 220.8 L184.2 223.9 L179.8 226.6 L175.3 229.0 L170.7 230.9 L166.1 232.3 L161.6 233.3 L157.1 233.8 L152.7 233.8 L148.5 233.4 L144.4 232.5 L140.4 231.2 L136.7 229.4 L133.3 227.1 L130.1 224.5 L127.2 221.4 L124.7 218.0 L122.5 214.2 L120.6 210.1 L119.1 205.7 L118.0 201.0 L117.3 196.2 L116.9 191.1 L117.0 185.9 L117.5 180.6 L118.3 175.2 L119.6 169.8 L121.2 164.4 L123.2 159.1 L125.5 153.9 L128.2 148.8 L131.2 143.9 L134.4 139.2 L138.0 134.7 L141.8 130.6 L145.7 126.7 L149.9 123.2 L154.2 120.1 L158.6 117.4 L163.1 115.0 L167.7 113.1 L172.3 111.7 L176.8 110.7 L181.3 110.2 L185.7 110.2 L189.9 110.6 L194.0 111.5 L198.0 112.8 L201.7 114.6Z" fill="url(#v1face)" stroke="#15151c" stroke-width="1.3"/><path d="M199.0 119.3 L199.6 119.9 L199.9 120.6 L200.0 121.6 L199.9 122.6 L199.4 123.6 L198.8 124.5 L198.0 125.2 L197.2 125.6 L196.3 125.7 L195.5 125.4 L195.0 124.9 L194.6 124.1 L194.5 123.2 L194.7 122.2 L195.1 121.2 L195.7 120.3 L196.5 119.6 L197.4 119.2 L198.2 119.1 L199.0 119.3Z" fill="#5c5c74" stroke="#15151c" stroke-width="1.25"/><path d="M197.8 119.6 L198.3 120.0 L198.5 120.6 L198.6 121.3 L198.5 122.1 L198.2 122.9 L197.7 123.6 L197.1 124.1 L196.4 124.4 L195.7 124.5 L195.2 124.3 L194.7 123.9 L194.4 123.3 L194.3 122.6 L194.5 121.8 L194.8 121.0 L195.3 120.3 L195.9 119.8 L196.6 119.5 L197.2 119.4 L197.8 119.6Z" fill="#9292b0"/><path d="M213.0 136.0 L213.6 136.6 L213.9 137.3 L214.0 138.3 L213.8 139.3 L213.4 140.3 L212.8 141.2 L212.0 141.9 L211.1 142.3 L210.3 142.3 L209.5 142.1 L208.9 141.6 L208.6 140.8 L208.5 139.9 L208.6 138.8 L209.1 137.8 L209.7 137.0 L210.5 136.3 L211.4 135.9 L212.2 135.8 L213.0 136.0Z" fill="#5c5c74" stroke="#15151c" stroke-width="1.25"/><path d="M211.8 136.3 L212.2 136.7 L212.5 137.3 L212.6 138.0 L212.5 138.8 L212.1 139.6 L211.6 140.3 L211.0 140.8 L210.4 141.1 L209.7 141.2 L209.1 141.0 L208.7 140.6 L208.4 140.0 L208.3 139.2 L208.5 138.4 L208.8 137.7 L209.3 137.0 L209.9 136.5 L210.5 136.2 L211.2 136.1 L211.8 136.3Z" fill="#9292b0"/><path d="M215.7 161.5 L216.3 162.1 L216.6 162.8 L216.7 163.8 L216.6 164.8 L216.1 165.8 L215.5 166.7 L214.7 167.4 L213.8 167.8 L213.0 167.9 L212.2 167.6 L211.6 167.1 L211.3 166.3 L211.2 165.4 L211.3 164.3 L211.8 163.3 L212.4 162.5 L213.2 161.8 L214.1 161.4 L214.9 161.3 L215.7 161.5Z" fill="#5c5c74" stroke="#15151c" stroke-width="1.25"/><path d="M214.5 161.8 L215.0 162.2 L215.2 162.8 L215.3 163.5 L215.2 164.3 L214.9 165.1 L214.4 165.8 L213.7 166.3 L213.1 166.6 L212.4 166.7 L211.8 166.5 L211.4 166.1 L211.1 165.5 L211.0 164.7 L211.2 164.0 L211.5 163.2 L212.0 162.5 L212.6 162.0 L213.3 161.7 L213.9 161.6 L214.5 161.8Z" fill="#9292b0"/><path d="M206.4 189.0 L207.0 189.6 L207.3 190.3 L207.4 191.3 L207.3 192.3 L206.8 193.3 L206.2 194.2 L205.4 194.9 L204.6 195.3 L203.7 195.3 L202.9 195.1 L202.4 194.6 L202.0 193.8 L201.9 192.9 L202.1 191.8 L202.5 190.8 L203.1 190.0 L203.9 189.3 L204.8 188.9 L205.6 188.8 L206.4 189.0Z" fill="#5c5c74" stroke="#15151c" stroke-width="1.25"/><path d="M205.2 189.3 L205.7 189.7 L206.0 190.3 L206.0 191.0 L205.9 191.8 L205.6 192.6 L205.1 193.3 L204.5 193.8 L203.8 194.1 L203.1 194.2 L202.6 194.0 L202.1 193.6 L201.8 193.0 L201.7 192.2 L201.9 191.4 L202.2 190.7 L202.7 190.0 L203.3 189.5 L204.0 189.2 L204.6 189.1 L205.2 189.3Z" fill="#9292b0"/><path d="M187.6 211.1 L188.2 211.7 L188.6 212.4 L188.7 213.4 L188.5 214.4 L188.1 215.4 L187.4 216.3 L186.6 217.0 L185.8 217.4 L184.9 217.5 L184.2 217.2 L183.6 216.7 L183.2 215.9 L183.1 215.0 L183.3 214.0 L183.7 213.0 L184.3 212.1 L185.1 211.4 L186.0 211.0 L186.9 210.9 L187.6 211.1Z" fill="#5c5c74" stroke="#15151c" stroke-width="1.25"/><path d="M186.4 211.4 L186.9 211.8 L187.2 212.4 L187.2 213.1 L187.1 213.9 L186.8 214.7 L186.3 215.4 L185.7 215.9 L185.0 216.2 L184.4 216.3 L183.8 216.1 L183.3 215.7 L183.0 215.1 L183.0 214.4 L183.1 213.6 L183.4 212.8 L183.9 212.1 L184.5 211.6 L185.2 211.3 L185.8 211.2 L186.4 211.4Z" fill="#9292b0"/><path d="M164.4 222.0 L164.9 222.5 L165.3 223.3 L165.4 224.2 L165.2 225.2 L164.8 226.2 L164.2 227.1 L163.4 227.8 L162.5 228.2 L161.7 228.3 L160.9 228.0 L160.3 227.5 L160.0 226.7 L159.9 225.8 L160.0 224.8 L160.4 223.8 L161.1 222.9 L161.9 222.2 L162.7 221.8 L163.6 221.7 L164.4 222.0Z" fill="#5c5c74" stroke="#15151c" stroke-width="1.25"/><path d="M163.2 222.2 L163.6 222.6 L163.9 223.2 L164.0 223.9 L163.9 224.7 L163.5 225.5 L163.0 226.2 L162.4 226.7 L161.8 227.0 L161.1 227.1 L160.5 226.9 L160.1 226.5 L159.8 225.9 L159.7 225.2 L159.8 224.4 L160.2 223.6 L160.7 222.9 L161.3 222.4 L161.9 222.1 L162.6 222.0 L163.2 222.2Z" fill="#9292b0"/><path d="M142.9 218.6 L143.4 219.1 L143.8 219.9 L143.9 220.8 L143.7 221.8 L143.3 222.8 L142.7 223.7 L141.9 224.4 L141.0 224.8 L140.2 224.9 L139.4 224.7 L138.8 224.1 L138.5 223.4 L138.4 222.4 L138.5 221.4 L139.0 220.4 L139.6 219.5 L140.4 218.8 L141.2 218.4 L142.1 218.3 L142.9 218.6Z" fill="#5c5c74" stroke="#15151c" stroke-width="1.25"/><path d="M141.7 218.8 L142.1 219.2 L142.4 219.8 L142.5 220.6 L142.4 221.3 L142.0 222.1 L141.5 222.8 L140.9 223.3 L140.3 223.6 L139.6 223.7 L139.0 223.5 L138.6 223.1 L138.3 222.5 L138.2 221.8 L138.3 221.0 L138.7 220.2 L139.2 219.5 L139.8 219.0 L140.4 218.7 L141.1 218.6 L141.7 218.8Z" fill="#9292b0"/><path d="M128.9 201.9 L129.5 202.4 L129.8 203.2 L129.9 204.1 L129.8 205.2 L129.3 206.2 L128.7 207.0 L127.9 207.7 L127.0 208.1 L126.2 208.2 L125.4 208.0 L124.8 207.4 L124.5 206.7 L124.4 205.7 L124.6 204.7 L125.0 203.7 L125.6 202.8 L126.4 202.1 L127.3 201.7 L128.1 201.7 L128.9 201.9Z" fill="#5c5c74" stroke="#15151c" stroke-width="1.25"/><path d="M127.7 202.1 L128.2 202.5 L128.4 203.1 L128.5 203.9 L128.4 204.7 L128.1 205.4 L127.6 206.1 L127.0 206.6 L126.3 206.9 L125.6 207.0 L125.0 206.8 L124.6 206.4 L124.3 205.8 L124.2 205.1 L124.4 204.3 L124.7 203.5 L125.2 202.9 L125.8 202.3 L126.5 202.0 L127.1 202.0 L127.7 202.1Z" fill="#9292b0"/><path d="M126.2 176.4 L126.8 176.9 L127.1 177.7 L127.2 178.6 L127.1 179.7 L126.6 180.7 L126.0 181.5 L125.2 182.2 L124.3 182.6 L123.5 182.7 L122.7 182.5 L122.1 181.9 L121.8 181.2 L121.7 180.2 L121.8 179.2 L122.3 178.2 L122.9 177.3 L123.7 176.6 L124.6 176.2 L125.4 176.1 L126.2 176.4Z" fill="#5c5c74" stroke="#15151c" stroke-width="1.25"/><path d="M125.0 176.6 L125.4 177.0 L125.7 177.6 L125.8 178.4 L125.7 179.2 L125.3 179.9 L124.9 180.6 L124.2 181.1 L123.6 181.4 L122.9 181.5 L122.3 181.3 L121.9 180.9 L121.6 180.3 L121.5 179.6 L121.7 178.8 L122.0 178.0 L122.5 177.4 L123.1 176.8 L123.8 176.5 L124.4 176.5 L125.0 176.6Z" fill="#9292b0"/><path d="M135.5 148.9 L136.0 149.4 L136.4 150.2 L136.5 151.1 L136.3 152.2 L135.9 153.2 L135.3 154.0 L134.5 154.7 L133.6 155.1 L132.8 155.2 L132.0 155.0 L131.4 154.4 L131.1 153.7 L131.0 152.7 L131.1 151.7 L131.6 150.7 L132.2 149.8 L133.0 149.1 L133.8 148.7 L134.7 148.7 L135.5 148.9Z" fill="#5c5c74" stroke="#15151c" stroke-width="1.25"/><path d="M134.3 149.1 L134.7 149.5 L135.0 150.1 L135.1 150.9 L135.0 151.7 L134.6 152.4 L134.1 153.1 L133.5 153.6 L132.9 153.9 L132.2 154.0 L131.6 153.8 L131.2 153.4 L130.9 152.8 L130.8 152.1 L130.9 151.3 L131.3 150.5 L131.8 149.9 L132.4 149.3 L133.0 149.0 L133.7 149.0 L134.3 149.1Z" fill="#9292b0"/><path d="M154.2 126.8 L154.8 127.3 L155.2 128.1 L155.3 129.0 L155.1 130.0 L154.7 131.0 L154.1 131.9 L153.3 132.6 L152.4 133.0 L151.5 133.1 L150.8 132.9 L150.2 132.3 L149.8 131.6 L149.7 130.6 L149.9 129.6 L150.3 128.6 L151.0 127.7 L151.8 127.0 L152.6 126.6 L153.5 126.5 L154.2 126.8Z" fill="#5c5c74" stroke="#15151c" stroke-width="1.25"/><path d="M153.1 127.0 L153.5 127.4 L153.8 128.0 L153.9 128.8 L153.7 129.5 L153.4 130.3 L152.9 131.0 L152.3 131.5 L151.6 131.8 L151.0 131.9 L150.4 131.7 L149.9 131.3 L149.7 130.7 L149.6 130.0 L149.7 129.2 L150.1 128.4 L150.5 127.7 L151.2 127.2 L151.8 126.9 L152.5 126.8 L153.1 127.0Z" fill="#9292b0"/><path d="M177.5 116.0 L178.1 116.5 L178.4 117.3 L178.5 118.2 L178.4 119.2 L178.0 120.2 L177.3 121.1 L176.5 121.8 L175.7 122.2 L174.8 122.3 L174.0 122.0 L173.5 121.5 L173.1 120.7 L173.0 119.8 L173.2 118.8 L173.6 117.8 L174.2 116.9 L175.0 116.2 L175.9 115.8 L176.7 115.7 L177.5 116.0Z" fill="#5c5c74" stroke="#15151c" stroke-width="1.25"/><path d="M176.3 116.2 L176.8 116.6 L177.1 117.2 L177.1 117.9 L177.0 118.7 L176.7 119.5 L176.2 120.2 L175.6 120.7 L174.9 121.0 L174.2 121.1 L173.7 120.9 L173.2 120.5 L172.9 119.9 L172.8 119.2 L173.0 118.4 L173.3 117.6 L173.8 116.9 L174.4 116.4 L175.1 116.1 L175.7 116.0 L176.3 116.2Z" fill="#9292b0"/><path d="M195.1 126.3 L197.8 128.1 L200.3 130.2 L202.6 132.6 L204.7 135.4 L206.4 138.4 L207.9 141.7 L209.1 145.2 L210.0 148.9 L210.6 152.8 L210.8 156.8 L210.8 160.9 L210.4 165.2 L209.7 169.4 L208.7 173.7 L207.4 178.0 L205.9 182.3 L204.0 186.4 L201.9 190.5 L199.5 194.4 L196.9 198.1 L194.1 201.7 L191.1 205.0 L187.9 208.1 L184.6 210.9 L181.1 213.4 L177.6 215.5 L174.0 217.4 L170.4 218.9 L166.8 220.0 L163.1 220.8 L159.6 221.2 L156.1 221.3 L152.7 220.9 L149.4 220.2 L146.3 219.1 L143.3 217.7 L140.6 215.9 L138.1 213.8 L135.8 211.4 L133.7 208.6 L132.0 205.6 L130.5 202.3 L129.3 198.8 L128.4 195.1 L127.8 191.2 L127.6 187.2 L127.6 183.1 L128.0 178.8 L128.7 174.6 L129.7 170.3 L131.0 166.0 L132.5 161.7 L134.4 157.6 L136.5 153.5 L138.9 149.6 L141.5 145.9 L144.3 142.3 L147.3 139.0 L150.5 135.9 L153.8 133.1 L157.3 130.6 L160.8 128.5 L164.4 126.6 L168.0 125.1 L171.6 124.0 L175.3 123.2 L178.8 122.8 L182.3 122.7 L185.7 123.1 L189.0 123.8 L192.1 124.9 L195.1 126.3Z" fill="#8c8cac" stroke="#15151c" stroke-width="1.25"/><path d="M199.2 128.7 L202.0 130.5 L204.5 132.6 L206.8 135.0 L208.8 137.7 L210.6 140.8 L212.1 144.0 L213.3 147.5 L214.2 151.2 L214.8 155.1 L215.0 159.2 L215.0 163.3 L214.6 167.5 L213.9 171.8 L212.9 176.1 L211.6 180.4 L210.0 184.6 L208.2 188.8 L206.0 192.8 L203.7 196.8 L201.1 200.5 L198.2 204.0 L195.2 207.4 L192.1 210.4 L188.7 213.2 L185.3 215.7 L181.8 217.9 L178.2 219.7 L174.6 221.2 L170.9 222.4 L167.3 223.2 L163.8 223.6 L160.3 223.6 L156.9 223.3 L153.6 222.6 L150.5 221.5 L147.5 220.1 L144.8 218.3 L142.2 216.2 L140.0 213.7 L137.9 211.0 L136.1 208.0 L134.7 204.7 L133.5 201.2 L132.6 197.5 L132.0 193.6 L131.7 189.6 L131.8 185.4 L132.2 181.2 L132.8 176.9 L133.8 172.6 L135.1 168.3 L136.7 164.1 L138.6 159.9 L140.7 155.9 L143.1 152.0 L145.7 148.2 L148.5 144.7 L151.5 141.4 L154.7 138.3 L158.0 135.5 L161.4 133.0 L165.0 130.8 L168.6 129.0 L172.2 127.5 L175.8 126.3 L179.4 125.5 L183.0 125.1 L186.5 125.1 L189.9 125.4 L193.2 126.2 L196.3 127.2 L199.2 128.7Z" fill="url(#v1face)" stroke="#15151c" stroke-width="1.25"/><path d="M192.8 140.0 L194.9 141.3 L196.8 142.9 L198.5 144.8 L200.1 146.8 L201.4 149.1 L202.5 151.5 L203.4 154.2 L204.1 157.0 L204.5 159.9 L204.7 162.9 L204.7 166.0 L204.4 169.2 L203.9 172.4 L203.1 175.7 L202.2 178.9 L201.0 182.1 L199.6 185.2 L198.0 188.3 L196.2 191.2 L194.2 194.0 L192.1 196.7 L189.8 199.2 L187.4 201.5 L184.9 203.6 L182.4 205.5 L179.7 207.1 L177.0 208.5 L174.3 209.6 L171.5 210.5 L168.8 211.1 L166.1 211.4 L163.5 211.4 L161.0 211.2 L158.5 210.6 L156.1 209.8 L153.9 208.7 L151.9 207.4 L150.0 205.8 L148.2 204.0 L146.7 201.9 L145.4 199.6 L144.2 197.2 L143.3 194.5 L142.7 191.8 L142.2 188.8 L142.0 185.8 L142.1 182.7 L142.4 179.5 L142.9 176.3 L143.6 173.1 L144.6 169.8 L145.8 166.6 L147.2 163.5 L148.8 160.5 L150.6 157.5 L152.5 154.7 L154.7 152.0 L156.9 149.5 L159.3 147.2 L161.8 145.1 L164.4 143.3 L167.1 141.6 L169.8 140.2 L172.5 139.1 L175.2 138.2 L177.9 137.6 L180.6 137.3 L183.2 137.3 L185.8 137.6 L188.3 138.1 L190.6 138.9 L192.8 140.0Z" fill="url(#v1bore)" stroke="#15151c" stroke-width="1.35"/><g clip-path="url(#v1c)"><path d="M177.3 131.2 L179.4 132.6 L181.3 134.2 L183.0 136.0 L184.6 138.0 L185.9 140.3 L187.0 142.8 L187.9 145.4 L188.6 148.2 L189.0 151.1 L189.2 154.2 L189.2 157.3 L188.9 160.5 L188.4 163.7 L187.6 166.9 L186.7 170.1 L185.5 173.3 L184.1 176.5 L182.5 179.5 L180.7 182.4 L178.7 185.3 L176.6 187.9 L174.3 190.4 L171.9 192.7 L169.4 194.8 L166.9 196.7 L164.2 198.4 L161.5 199.7 L158.8 200.9 L156.1 201.7 L153.3 202.3 L150.6 202.6 L148.0 202.7 L145.5 202.4 L143.0 201.9 L140.7 201.1 L138.4 200.0 L136.4 198.6 L134.5 197.0 L132.7 195.2 L131.2 193.1 L129.9 190.9 L128.8 188.4 L127.9 185.8 L127.2 183.0 L126.8 180.1 L126.6 177.0 L126.6 173.9 L126.9 170.7 L127.4 167.5 L128.1 164.3 L129.1 161.1 L130.3 157.9 L131.7 154.7 L133.3 151.7 L135.1 148.7 L137.1 145.9 L139.2 143.3 L141.4 140.8 L143.8 138.5 L146.3 136.4 L148.9 134.5 L151.6 132.8 L154.3 131.5 L157.0 130.3 L159.7 129.5 L162.4 128.9 L165.1 128.6 L167.8 128.5 L170.3 128.8 L172.8 129.3 L175.1 130.1 L177.3 131.2Z" fill="#fff" stroke="#15151c" stroke-width="1.3"/></g><path d="M165.7 170.5 l4 2.6" stroke="#555" stroke-width="1" fill="none"/><rect x="155.7" y="166.4" width="1.6" height="1.6" fill="#7070e8"/><rect x="174.2" y="175.6" width="2" height="1.6" fill="#e04060"/><rect x="175.4" y="176.6" width="1.6" height="1.6" fill="#5050e8"/><rect x="0" y="0.2" width="334.6" height="2.9" fill="#828282"/><rect x="0" y="0.2" width="2.5" height="280" fill="#828282"/><rect x="332.2" y="1.5" width="2.4" height="279" fill="#fbfbfb"/><rect x="1" y="278" width="333.6" height="2.3" fill="#fbfbfb"/><path d="M332.2 3.1 L334.6 0.2 L334.6 3.1Z" fill="#fbfbfb"/></svg>
 <svg class="abs" style="left:814.0px;top:411.8px" width="335" height="281" viewBox="0 0 335 281"><rect x="0" y="0" width="335" height="281" fill="#f0f0f0"/><defs><linearGradient id="bg2" x1="0" y1="0" x2="0" y2="1"><stop offset="0" stop-color="#d9dbd7"/><stop offset="1" stop-color="#ffffff"/></linearGradient></defs><rect x="2.4" y="63.7" width="330" height="214.6" fill="url(#bg2)"/><g><path d="M5.9 6.5h4.6l-4.6 4.6Z M26.0 6.5v4.6l-4.6 -4.6Z M5.9 26.6v-4.6l4.6 4.6Z M26.0 26.6h-4.6l4.6 -4.6Z" fill="#a9a9a9"/><rect x="9.9" y="11.4" width="14.4" height="12.2" fill="none" stroke="#fff" stroke-width="1.2"/><rect x="9.1" y="10.6" width="14.4" height="12.2" fill="none" stroke="#a9a9a9" stroke-width="1.5"/><path d="M48.0 20.1 L54.0 26.1" stroke="#fff" stroke-width="2.2" fill="none"/><circle cx="43.1" cy="14.6" r="6.9" fill="none" stroke="#fff" stroke-width="1"/><circle cx="42.4" cy="13.9" r="6.9" fill="none" stroke="#b4b4b4" stroke-width="1.15"/><path d="M47.4 19.3 L53.2 25.1" stroke="#a9a9a9" stroke-width="2.3" fill="none"/><path d="M39.0 13.9H45.8 M42.4 10.5V17.3" stroke="#989898" stroke-width="1.9" fill="none"/><path d="M76.89999999999999 20.1 L82.89999999999999 26.1" stroke="#fff" stroke-width="2.2" fill="none"/><circle cx="72.0" cy="14.6" r="6.9" fill="none" stroke="#fff" stroke-width="1"/><circle cx="71.3" cy="13.9" r="6.9" fill="none" stroke="#b4b4b4" stroke-width="1.15"/><path d="M76.3 19.3 L82.1 25.1" stroke="#a9a9a9" stroke-width="2.3" fill="none"/><path d="M67.89999999999999 13.9H74.7" stroke="#989898" stroke-width="1.9" fill="none"/><path d="M111.5 9.5V22.3 M105.1 15.9H117.9" stroke="#b8b8b8" stroke-width="1.1" stroke-dasharray="1.3 1.3" fill="none"/><path d="M111.5 6.5l3.2 4h-6.4Z M111.5 25.3l3.2 -4h-6.4Z M102.1 15.9l4 -3.2v6.4Z M120.9 15.9l-4 -3.2v6.4Z" fill="#a9a9a9"/><path transform="translate(134.6 9)" d="M0.3 1.2 L8.6 0.6 L6.8 3.2 C11.5 4.2 14.6 7.2 14.4 10.6 C14.2 13.2 11.6 15.2 8.4 15.1 L5.6 11.4 C8.4 11.6 10.2 10.9 10.3 9.4 C10.4 7.6 8.2 6.2 5.2 5.6 L3.9 7.4 Z" fill="#a9a9a9"/><path transform="translate(176.2 9) scale(-1 1)" d="M0.3 1.2 L8.6 0.6 L6.8 3.2 C11.5 4.2 14.6 7.2 14.4 10.6 C14.2 13.2 11.6 15.2 8.4 15.1 L5.6 11.4 C8.4 11.6 10.2 10.9 10.3 9.4 C10.4 7.6 8.2 6.2 5.2 5.6 L3.9 7.4 Z" fill="#a9a9a9"/><circle cx="199.2" cy="17.4" r="4.2" fill="none" stroke="#b0b0b0" stroke-width="1.1"/><path d="M193.2 17.4H205.2 M199.2 11.399999999999999V23.4" stroke="#b0b0b0" stroke-width="1.1" fill="none"/><path d="M218.3 14.1 H228.1 L223.2 18.9Z" fill="#5e5e5e"/><polygon points="9.70,48.30 16.00,48.30 16.00,52.80 21.20,52.80 21.20,59.20 9.70,59.20" fill="none" stroke="#fff" stroke-width="1.0" stroke-linejoin="round"/><polygon points="21.20,52.80 25.80,48.20 25.80,54.60 21.20,59.20" fill="none" stroke="#fff" stroke-width="1.0" stroke-linejoin="round"/><polygon points="8.70,47.30 15.00,47.30 15.00,51.80 20.20,51.80 20.20,58.20 8.70,58.20" fill="none" stroke="#a9a9a9" stroke-width="1.1" stroke-linejoin="round"/><polygon points="8.70,47.30 13.30,42.70 19.60,42.70 15.00,47.30" fill="none" stroke="#a9a9a9" stroke-width="1.1" stroke-linejoin="round"/><polygon points="15.00,47.30 19.60,42.70 19.60,47.20 15.00,51.80" fill="none" stroke="#a9a9a9" stroke-width="1.1" stroke-linejoin="round"/><polygon points="15.00,51.80 19.60,47.20 24.80,47.20 20.20,51.80" fill="none" stroke="#a9a9a9" stroke-width="1.1" stroke-linejoin="round"/><polygon points="20.20,51.80 24.80,47.20 24.80,53.60 20.20,58.20" fill="none" stroke="#a9a9a9" stroke-width="1.1" stroke-linejoin="round"/><path d="M13.30 42.70 V53.60 H24.80 M8.70 58.20 L13.30 53.60" fill="none" stroke="#a9a9a9" stroke-width="1"/><polygon points="38.10,48.30 44.40,48.30 44.40,52.80 49.60,52.80 49.60,59.20 38.10,59.20" fill="none" stroke="#fff" stroke-width="1.0" stroke-linejoin="round"/><polygon points="49.60,52.80 54.20,48.20 54.20,54.60 49.60,59.20" fill="none" stroke="#fff" stroke-width="1.0" stroke-linejoin="round"/><polygon points="37.10,47.30 43.40,47.30 43.40,51.80 48.60,51.80 48.60,58.20 37.10,58.20" fill="#f4f4f4" stroke="#a9a9a9" stroke-width="1.15" stroke-linejoin="round"/><polygon points="37.10,47.30 41.70,42.70 48.00,42.70 43.40,47.30" fill="#f4f4f4" stroke="#a9a9a9" stroke-width="1.15" stroke-linejoin="round"/><polygon points="43.40,47.30 48.00,42.70 48.00,47.20 43.40,51.80" fill="#f4f4f4" stroke="#a9a9a9" stroke-width="1.15" stroke-linejoin="round"/><polygon points="43.40,51.80 48.00,47.20 53.20,47.20 48.60,51.80" fill="#f4f4f4" stroke="#a9a9a9" stroke-width="1.15" stroke-linejoin="round"/><polygon points="48.60,51.80 53.20,47.20 53.20,53.60 48.60,58.20" fill="#f4f4f4" stroke="#a9a9a9" stroke-width="1.15" stroke-linejoin="round"/><polygon points="66.00,47.30 72.30,47.30 72.30,51.80 77.50,51.80 77.50,58.20 66.00,58.20" fill="#8fd3f4" stroke="#0b0b10" stroke-width="1.35" stroke-linejoin="round"/><polygon points="66.00,47.30 70.60,42.70 76.90,42.70 72.30,47.30" fill="#c9ecfb" stroke="#0b0b10" stroke-width="1.35" stroke-linejoin="round"/><polygon points="72.30,51.80 76.90,47.20 82.10,47.20 77.50,51.80" fill="#c9ecfb" stroke="#0b0b10" stroke-width="1.35" stroke-linejoin="round"/><polygon points="72.30,47.30 76.90,42.70 76.90,47.20 72.30,51.80" fill="#1f7fb8" stroke="#0b0b10" stroke-width="1.35" stroke-linejoin="round"/><polygon points="77.50,51.80 82.10,47.20 82.10,53.60 77.50,58.20" fill="#1f7fb8" stroke="#0b0b10" stroke-width="1.35" stroke-linejoin="round"/><polygon points="93.20,48.30 99.50,48.30 99.50,52.80 104.70,52.80 104.70,59.20 93.20,59.20" fill="none" stroke="#fff" stroke-width="1.0" stroke-linejoin="round"/><polygon points="104.70,52.80 109.30,48.20 109.30,54.60 104.70,59.20" fill="none" stroke="#fff" stroke-width="1.0" stroke-linejoin="round"/><polygon points="92.20,47.30 98.50,47.30 98.50,51.80 103.70,51.80 103.70,58.20 92.20,58.20" fill="#f6f6f6" stroke="#a9a9a9" stroke-width="1.1" stroke-linejoin="round"/><polygon points="92.20,47.30 96.80,42.70 103.10,42.70 98.50,47.30" fill="#ececec" stroke="#a9a9a9" stroke-width="1.0" stroke-linejoin="round"/><polygon points="98.50,51.80 103.10,47.20 108.30,47.20 103.70,51.80" fill="#ececec" stroke="#a9a9a9" stroke-width="1.0" stroke-linejoin="round"/><polygon points="98.50,47.30 103.10,42.70 103.10,47.20 98.50,51.80" fill="#a8a8a8" stroke="#a8a8a8" stroke-width="0.8" stroke-linejoin="round"/><polygon points="103.70,51.80 108.30,47.20 108.30,53.60 103.70,58.20" fill="#a8a8a8" stroke="#a8a8a8" stroke-width="0.8" stroke-linejoin="round"/></g><defs><linearGradient id="v2side" x1="0" y1="0" x2="1" y2="0"><stop offset="0" stop-color="#4c4c62"/><stop offset="0.12" stop-color="#6e6e88"/><stop offset="0.5" stop-color="#8e8eac"/><stop offset="1" stop-color="#9a9ab8"/></linearGradient><linearGradient id="v2hub" x1="0" y1="0" x2="1" y2="0"><stop offset="0" stop-color="#54546c"/><stop offset="0.35" stop-color="#8a8aa8"/><stop offset="1" stop-color="#9c9cba"/></linearGradient><linearGradient id="v2bore" x1="0" y1="0" x2="1" y2="0"><stop offset="0" stop-color="#9a9ab6"/><stop offset="0.45" stop-color="#8888a4"/><stop offset="1" stop-color="#5e5e76"/></linearGradient><linearGradient id="v2top" x1="0" y1="0" x2="1" y2="1"><stop offset="0" stop-color="#a0a0be"/><stop offset="1" stop-color="#9696b4"/></linearGradient><linearGradient id="v2hole" x1="0" y1="0" x2="1" y2="0"><stop offset="0" stop-color="#b0b0cc"/><stop offset="1" stop-color="#6c6c86"/></linearGradient></defs><path d="M72.2 166.2 V184.2 A95.8 49.6 0 0 0 263.8 184.2 V166.2Z" fill="url(#v2side)" stroke="#15151c" stroke-width="1.1"/><ellipse cx="168.0" cy="166.2" rx="95.8" ry="49.6" fill="url(#v2top)" stroke="#15151c" stroke-width="1.1"/><ellipse cx="244.5" cy="172.1" rx="9" ry="4.8" fill="url(#v2hole)" stroke="#15151c" stroke-width="1.3"/><path d="M236.3 173.7 A9 4.8 0 0 0 252.7 173.7 A9.6 3.4 0 0 1 236.3 173.7Z" fill="#a2a2c0"/><ellipse cx="214.0" cy="198.3" rx="9" ry="4.8" fill="url(#v2hole)" stroke="#15151c" stroke-width="1.3"/><path d="M205.8 199.9 A9 4.8 0 0 0 222.2 199.9 A9.6 3.4 0 0 1 205.8 199.9Z" fill="#a2a2c0"/><ellipse cx="156.6" cy="205.7" rx="9" ry="4.8" fill="url(#v2hole)" stroke="#15151c" stroke-width="1.3"/><path d="M148.4 207.3 A9 4.8 0 0 0 164.8 207.3 A9.6 3.4 0 0 1 148.4 207.3Z" fill="#a2a2c0"/><ellipse cx="105.8" cy="189.9" rx="9" ry="4.8" fill="url(#v2hole)" stroke="#15151c" stroke-width="1.3"/><path d="M97.6 191.5 A9 4.8 0 0 0 114.0 191.5 A9.6 3.4 0 0 1 97.6 191.5Z" fill="#a2a2c0"/><ellipse cx="91.5" cy="160.3" rx="9" ry="4.8" fill="url(#v2hole)" stroke="#15151c" stroke-width="1.3"/><path d="M83.3 161.9 A9 4.8 0 0 0 99.7 161.9 A9.6 3.4 0 0 1 83.3 161.9Z" fill="#a2a2c0"/><ellipse cx="122.0" cy="134.1" rx="9" ry="4.8" fill="url(#v2hole)" stroke="#15151c" stroke-width="1.3"/><path d="M113.8 135.7 A9 4.8 0 0 0 130.2 135.7 A9.6 3.4 0 0 1 113.8 135.7Z" fill="#a2a2c0"/><ellipse cx="179.4" cy="126.7" rx="9" ry="4.8" fill="url(#v2hole)" stroke="#15151c" stroke-width="1.3"/><path d="M171.2 128.3 A9 4.8 0 0 0 187.6 128.3 A9.6 3.4 0 0 1 171.2 128.3Z" fill="#a2a2c0"/><ellipse cx="230.2" cy="142.5" rx="9" ry="4.8" fill="url(#v2hole)" stroke="#15151c" stroke-width="1.3"/><path d="M222.0 144.1 A9 4.8 0 0 0 238.4 144.1 A9.6 3.4 0 0 1 222.0 144.1Z" fill="#a2a2c0"/><path d="M121.2 147.0 V166.2 A46.8 24.3 0 0 0 214.8 166.2 V147.0Z" fill="url(#v2hub)" stroke="#15151c" stroke-width="1"/><ellipse cx="168.0" cy="147.0" rx="46.8" ry="24.3" fill="#a6a6c4" stroke="#15151c" stroke-width="1.1"/><ellipse cx="168.0" cy="147.3" rx="44.199999999999996" ry="22.6" fill="url(#v2bore)" stroke="#15151c" stroke-width="1"/><path d="M168.0 183.2 V194.2" stroke="#3838d0" stroke-width="1" fill="none"/><path d="M168.0 194.2 L173.0 190.7" stroke="#30b050" stroke-width="1" fill="none"/><path d="M168.0 194.2 L179.5 198.2" stroke="#e03030" stroke-width="1" fill="none"/><path d="M20.299999999999955 252.2 V260.7" stroke="#5050e0" stroke-width="1" fill="none"/><path d="M20.299999999999955 260.7 L27.0 255.2" stroke="#50d060" stroke-width="1" fill="none"/><path d="M20.299999999999955 260.7 L31.5 264.7" stroke="#e04040" stroke-width="1" fill="none"/><text x="15.600000000000023" y="253.99999999999994" font-family="Liberation Sans, sans-serif" font-size="18" fill="#7474ee" stroke="#7474ee" stroke-width="0.5" textLength="8.6" lengthAdjust="spacingAndGlyphs">Z</text><text x="23.799999999999955" y="262.2" font-family="Liberation Sans, sans-serif" font-size="16.5" fill="#5fe06a" stroke="#5fe06a" stroke-width="0.5" textLength="8.4" lengthAdjust="spacingAndGlyphs">Y</text><text x="29.600000000000023" y="272.40000000000003" font-family="Liberation Sans, sans-serif" font-size="17.5" fill="#e45a5a" stroke="#e45a5a" stroke-width="0.5" textLength="9.6" lengthAdjust="spacingAndGlyphs">X</text><rect x="0" y="0.2" width="334.6" height="2.9" fill="#828282"/><rect x="0" y="0.2" width="2.5" height="280" fill="#828282"/><rect x="332.2" y="1.5" width="2.4" height="279" fill="#fbfbfb"/><rect x="1" y="278" width="333.6" height="2.3" fill="#fbfbfb"/><path d="M332.2 3.1 L334.6 0.2 L334.6 3.1Z" fill="#fbfbfb"/></svg>

 <div class="stl"></div><div class="std"></div>
 <div class="abs" style="left:18.5px;top:714.6px;line-height:16px;white-space:nowrap;letter-spacing:0.25px;transform:scaleX(0.877);transform-origin:0 0">4/495 (2068)</div>

 <div class="btn" style="left:943.8px;top:748.3px;width:101px;height:22.2px;line-height:20.5px"><span>OK</span></div>
 <div class="btn" style="left:1056.3px;top:748.3px;width:101.6px;height:22.2px;line-height:20.5px"><span>Peruuta</span></div>

 <div class="bl"></div><div class="bt"></div><div class="bb"></div>
</div>
</body></html>
